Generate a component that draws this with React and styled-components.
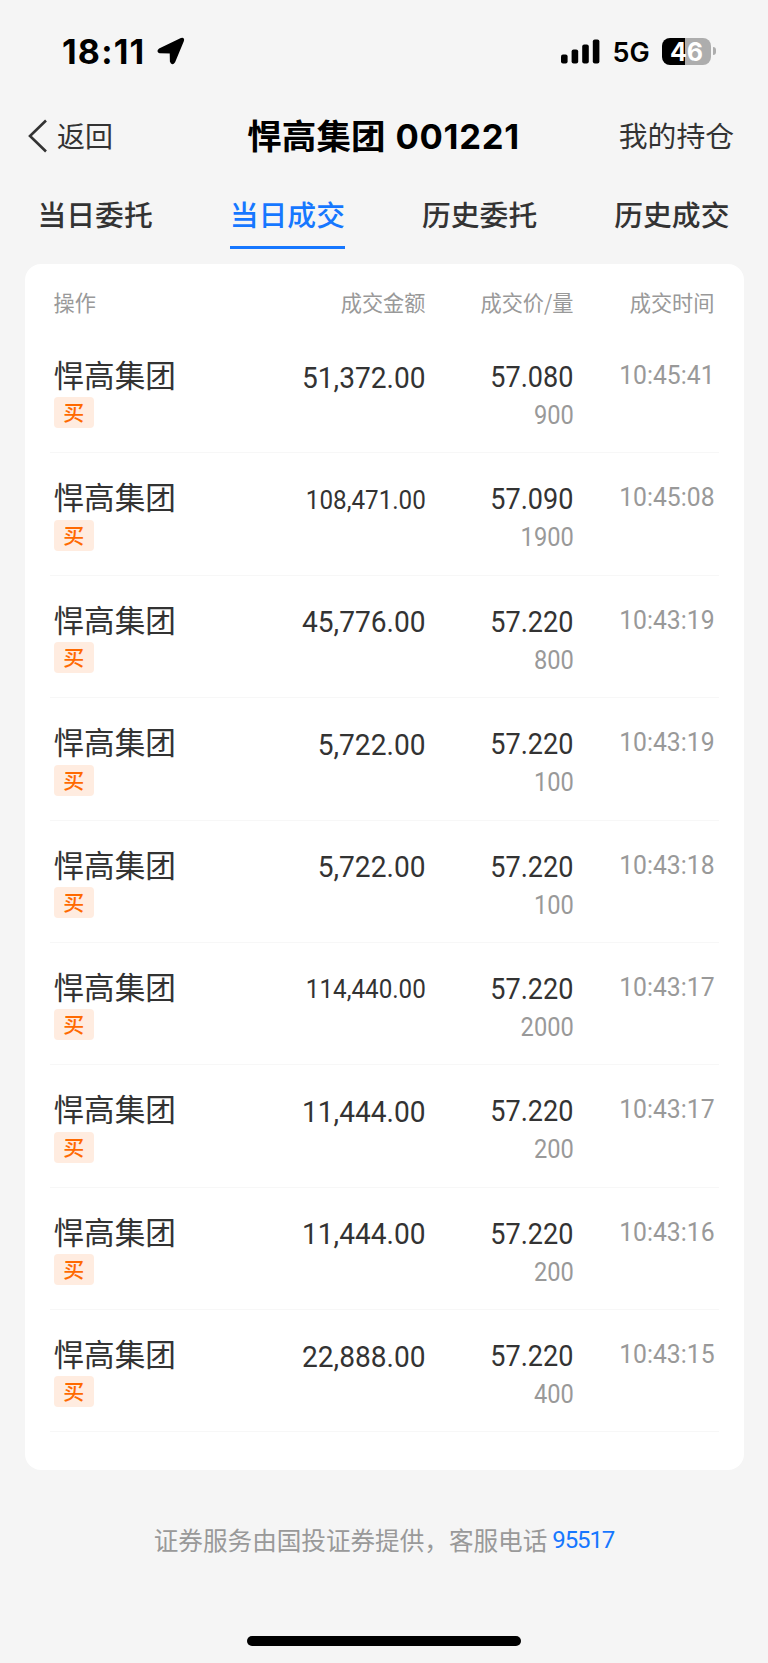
import React from 'react';
import styled, { createGlobalStyle } from 'styled-components';

const GlobalStyle = createGlobalStyle`
  * { box-sizing: border-box; }
  body {
    margin: 0;
    background: #f5f5f5;
    font-family: "Noto Sans CJK SC", sans-serif;
    color: #333;
  }
`;

const Screen = styled.div`
  width: 768px;
  height: 1663px;
  display: flex;
  flex-direction: column;
  overflow: hidden;
  background: #f5f5f5;
`;

const StatusBar = styled.div`
  height: 102px;
  flex: none;
  padding: 0 52px 0 62px;
  display: flex;
  align-items: center;
  justify-content: space-between;
  color: #000;
  font-family: Inter, sans-serif;
`;

const StatusGroup = styled.div`
  display: flex;
  align-items: center;
`;

const Clock = styled.span`
  width: 95px;
  font-size: 34px;
  font-weight: 750;
  line-height: 40px;
  letter-spacing: 1.2px;
  padding-top: 1px;
`;

const Network = styled.span`
  font-size: 27px;
  font-weight: 600;
  line-height: 34px;
  letter-spacing: 0.2px;
  margin: 3px 12px 0 12px;
`;

const Battery = styled.div`
  width: 49px;
  height: 27px;
  border-radius: 8px;
  background: linear-gradient(90deg, #000 0 47.5%, #adadad 47.5%);
  color: #fff;
  font-size: 25px;
  font-weight: 700;
  line-height: 28px;
  text-align: center;
`;

const BatteryTip = styled.div`
  width: 3px;
  height: 8px;
  margin-left: 2px;
  border-radius: 0 3px 3px 0;
  background: #adadad;
`;

const NavBar = styled.header`
  height: 67px;
  flex: none;
  padding: 0 34px 0 28px;
  display: grid;
  grid-template-columns: 1fr auto 1fr;
  align-items: center;
`;

const BackLink = styled.div`
  display: flex;
  align-items: center;
  font-size: 28px;
  line-height: 40px;
`;

const BackLabel = styled.span`
  margin: -2px 0 0 9px;
`;

const Title = styled.h1`
  margin: -2px 0 0 5px;
  color: #000;
  font-size: 34.6px;
  line-height: 50px;
  font-weight: 700;
  white-space: nowrap;
`;

const StockCode = styled.span`
  font-family: Inter, sans-serif;
  font-weight: 650;
  letter-spacing: 0.7px;
  margin-left: 10px;
`;

const NavAction = styled.div`
  justify-self: end;
  margin-top: -2px;
  font-size: 28.8px;
  line-height: 40px;
`;

const Tabs = styled.nav`
  height: 95px;
  flex: none;
  padding-top: 3px;
  margin-left: -1px;
  display: grid;
  grid-template-columns: repeat(4, 1fr);
  justify-items: center;
`;

const Tab = styled.div`
  height: 77px;
  padding-top: 21px;
  border-bottom: 3px solid ${(p) => (p.$active ? '#1677ff' : 'transparent')};
  color: ${(p) => (p.$active ? '#1677ff' : '#333')};
  font-size: 28.8px;
  line-height: 42px;
  font-weight: 500;
`;

const Card = styled.main`
  flex: none;
  height: 1206px;
  margin: 0 24.5px;
  padding: 0 25px;
  border-radius: 16px;
  background: #fff;
`;

const gridColumns = `
  display: grid;
  grid-template-columns: 190px 182px 148px 141px;
  padding: 0 4px;
`;

const HeaderRow = styled.div`
  ${gridColumns}
  height: 67px;
  align-items: center;
  padding-top: 8px;
  color: #999;
  font-size: 21.2px;
  line-height: 30px;
`;

const HeaderCell = styled.div`
  text-align: ${(p) => (p.$left ? 'left' : 'right')};
`;

const TradeRow = styled.div`
  ${gridColumns}
  height: 122.375px;
  border-bottom: 1px solid #f7f7f7;
`;

const NameCell = styled.div`
  padding-top: 21px;
`;

const StockName = styled.div`
  font-size: 30.6px;
  line-height: 44px;
  font-weight: 400;
`;

const SideTag = styled.div`
  width: 40.5px;
  height: 31px;
  margin-top: 1.4px;
  border-radius: 4px;
  background: #ffece0;
  color: #ff6a00;
  font-size: 21px;
  line-height: 29px;
  font-weight: 500;
  text-align: center;
`;

const NumberCell = styled.div`
  display: flex;
  flex-direction: column;
  align-items: flex-end;
  padding-top: ${(p) => p.$top}px;
`;

const Figure = styled.span`
  font-family: Roboto, sans-serif;
  font-size: ${(p) => (p.$small ? 26.6 : 30.4)}px;
  line-height: 38px;
  color: ${(p) => (p.$muted ? '#999' : '#333')};
  font-weight: 400;
  transform: scaleX(${(p) => p.$stretch || 0.89});
  transform-origin: right center;
  white-space: nowrap;
`;

const Footer = styled.footer`
  height: 166px;
  flex: none;
  padding-top: 51px;
  display: flex;
  justify-content: center;
  color: #999;
  font-size: 24.6px;
  line-height: 36px;
`;

const Phone = styled.a`
  margin-left: 5px;
  padding-top: 1px;
  color: #1677ff;
  font-family: Roboto, sans-serif;
  font-size: 24px;
  letter-spacing: -1.1px;
`;

const HomeIndicator = styled.div`
  width: 274px;
  height: 10px;
  flex: none;
  align-self: center;
  border-radius: 5px;
  background: #000;
`;

const trades = [
  ['51,372.00', '57.080', '900', '10:45:41'],
  ['108,471.00', '57.090', '1900', '10:45:08'],
  ['45,776.00', '57.220', '800', '10:43:19'],
  ['5,722.00', '57.220', '100', '10:43:19'],
  ['5,722.00', '57.220', '100', '10:43:18'],
  ['114,440.00', '57.220', '2000', '10:43:17'],
  ['11,444.00', '57.220', '200', '10:43:17'],
  ['11,444.00', '57.220', '200', '10:43:16'],
  ['22,888.00', '57.220', '400', '10:43:15'],
];

const tabs = ['当日委托', '当日成交', '历史委托', '历史成交'];

function LocationIcon() {
  return (
    <svg width="28" height="28" viewBox="0 0 28 28">
      <path
        d="M2.6 12.7 24.4 2.2Q26.6 1.4 25.7 3.8L17.1 24.6Q15.2 27.4 14.1 24.4L13.9 15.3 2.9 15Q.6 14.2 2.6 12.7Z"
        stroke="#000"
        strokeWidth="2.4"
        strokeLinejoin="round"
      />
    </svg>
  );
}

function SignalIcon() {
  return (
    <svg width="39" height="25" viewBox="0 0 39 25">
      <rect x="0" y="15.5" width="6.6" height="9" rx="2" />
      <rect x="10.6" y="10.5" width="6.6" height="14" rx="2" />
      <rect x="21.2" y="5.5" width="6.6" height="19" rx="2" />
      <rect x="31.8" y="0.4" width="6.6" height="24.1" rx="2" />
    </svg>
  );
}

function BackIcon() {
  return (
    <svg width="20" height="34" viewBox="0 0 20 34" fill="none">
      <path d="M18 1.5 2 17 18 32.5" stroke="#333" strokeWidth="2.6" />
    </svg>
  );
}

export default function App() {
  return (
    <Screen>
      <GlobalStyle />
      <StatusBar>
        <StatusGroup>
          <Clock>18:11</Clock>
          <LocationIcon />
        </StatusGroup>
        <StatusGroup>
          <SignalIcon />
          <Network>5G</Network>
          <Battery>46</Battery>
          <BatteryTip />
        </StatusGroup>
      </StatusBar>
      <NavBar>
        <BackLink>
          <BackIcon />
          <BackLabel>返回</BackLabel>
        </BackLink>
        <Title>
          悍高集团<StockCode>001221</StockCode>
        </Title>
        <NavAction>我的持仓</NavAction>
      </NavBar>
      <Tabs>
        {tabs.map((label, i) => (
          <Tab key={label} $active={i === 1}>{label}</Tab>
        ))}
      </Tabs>
      <Card>
        <HeaderRow>
          <HeaderCell $left>操作</HeaderCell>
          <HeaderCell>成交金额</HeaderCell>
          <HeaderCell>成交价/量</HeaderCell>
          <HeaderCell>成交时间</HeaderCell>
        </HeaderRow>
        {trades.map(([amount, price, volume, time], i) => (
          <TradeRow key={i}>
            <NameCell>
              <StockName>悍高集团</StockName>
              <SideTag>买</SideTag>
            </NameCell>
            <NumberCell $top={27.5}>
              <Figure $small={amount.length > 9} $stretch={amount.length > 9 ? 0.91 : 0.925}>
                {amount}
              </Figure>
            </NumberCell>
            <NumberCell $top={27}>
              <Figure>{price}</Figure>
              <Figure $small $muted>{volume}</Figure>
            </NumberCell>
            <NumberCell $top={25}>
              <Figure $small $muted $stretch={0.93}>{time}</Figure>
            </NumberCell>
          </TradeRow>
        ))}
      </Card>
      <Footer>
        <span>证券服务由国投证券提供，客服电话</span>
        <Phone>95517</Phone>
      </Footer>
      <HomeIndicator />
    </Screen>
  );
}
